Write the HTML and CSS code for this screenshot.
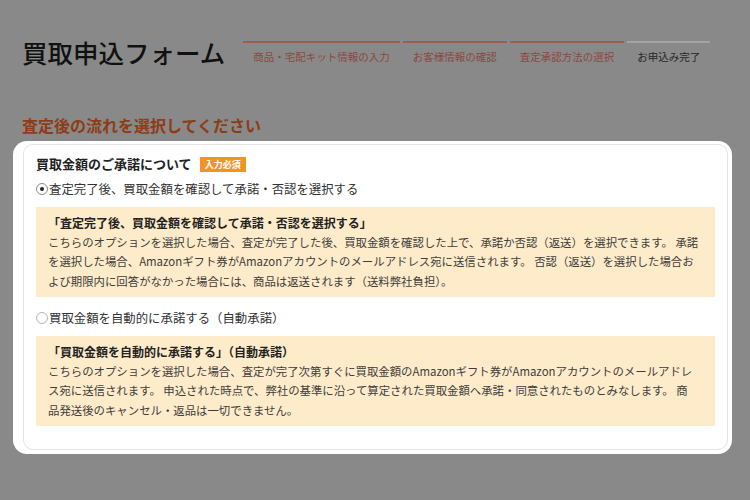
FILE: index.html
```html
<!DOCTYPE html>
<html lang="ja">
<head>
    <meta charset="UTF-8">
    <meta name="viewport" content="width=device-width, initial-scale=1.0">
    <title>買取申込フォーム</title>
    <link rel="stylesheet" href="styles.css">
</head>
<body>
    <div class="pagina">
        <div class="cabecalho">
            <h1 class="titulo">買取申込フォーム</h1>
            <ol class="etapas">
                <li class="etapa feita">商品・宅配キット情報の入力</li>
                <li class="etapa feita">お客様情報の確認</li>
                <li class="etapa feita">査定承認方法の選択</li>
                <li class="etapa">お申込み完了</li>
            </ol>
        </div>

        <h2 class="subtitulo">査定後の流れを選択してください</h2>

        <div class="destaque">
            <div class="caixa">
                <div class="campo-titulo">
                    <span>買取金額のご承諾について</span>
                    <span class="obrigatorio">入力必須</span>
                </div>

                <!-- opção 1 -->
                <label class="opcao">
                    <span class="radio marcado"></span>
                    査定完了後、買取金額を確認して承諾・否認を選択する
                </label>
                <div class="explicacao">
                    <p class="explicacao-titulo">「査定完了後、買取金額を確認して承諾・否認を選択する」</p>
                    <p>こちらのオプションを選択した場合、査定が完了した後、買取金額を確認した上で、承諾か否認（返送）を選択できます。 承諾<br>を選択した場合、Amazonギフト券がAmazonアカウントのメールアドレス宛に送信されます。 否認（返送）を選択した場合お<br>よび期限内に回答がなかった場合には、商品は返送されます（送料弊社負担）。</p>
                </div>

                <!-- opção 2 -->
                <label class="opcao segunda">
                    <span class="radio"></span>
                    買取金額を自動的に承諾する（自動承諾）
                </label>
                <div class="explicacao">
                    <p class="explicacao-titulo">「買取金額を自動的に承諾する」（自動承諾）</p>
                    <p>こちらのオプションを選択した場合、査定が完了次第すぐに買取金額のAmazonギフト券がAmazonアカウントのメールアドレ<br>ス宛に送信されます。 申込された時点で、弊社の基準に沿って算定された買取金額へ承諾・同意されたものとみなします。 商<br>品発送後のキャンセル・返品は一切できません。</p>
                </div>
            </div>
        </div>
    </div>
</body>
</html>
```

FILE: styles.css
```css
body {
    margin: 0;
    background-color: #898989;
    font-family: "Noto Sans CJK JP", sans-serif;
    color: #333;
}
.pagina {
    padding: 37px 18px 0 22px;
}
.cabecalho {
    display: flex;
    align-items: flex-start;
}
.titulo {
    margin: 0;
    font-size: 25.5px;
    line-height: 30px;
    font-weight: 500;
    color: #111;
}
.etapas {
    display: flex;
    gap: 3px;
    list-style: none;
    margin: 4px 0 0 18px;
    padding: 0;
}
.etapa {
    border-top: 2px solid #a3a3a3;
    padding: 7px 10px 0;
    font-size: 10.5px;
    line-height: 14px;
    color: #262626;
}
.etapa.feita {
    border-top-color: #9c5d52;
    color: #8a4a40;
}
.subtitulo {
    margin: 47px 0 0;
    font-size: 16px;
    line-height: 22px;
    font-weight: bold;
    color: #8d3c17;
}
.destaque {
    margin: 5px 0 0 -9px;
    padding: 3px 4px 4px 10px;
    background-color: white;
    border-radius: 14px;
}
.caixa {
    border: 1px solid #e4e4e4;
    border-radius: 10px;
    padding: 8px 12px 23px;
}
.campo-titulo {
    display: flex;
    align-items: center;
    gap: 8px;
    font-size: 13px;
    line-height: 22px;
    font-weight: bold;
    color: #222;
}
.obrigatorio {
    background-color: #f19425;
    color: white;
    font-size: 9px;
    line-height: 15px;
    padding: 0 5px;
}
.opcao {
    display: flex;
    align-items: center;
    gap: 1px;
    margin-top: 4px;
    font-size: 12.4px;
    line-height: 20px;
    color: #333;
}
.opcao.segunda {
    margin-top: 11px;
}
.radio {
    width: 10px;
    height: 10px;
    border: 1px solid #b5b5b5;
    border-radius: 50%;
    display: flex;
    align-items: center;
    justify-content: center;
    background-color: white;
}
.radio.marcado {
    border-color: #8c8c8c;
}
.radio.marcado::after {
    content: "";
    width: 4px;
    height: 4px;
    border-radius: 50%;
    background-color: #222;
}
.explicacao {
    margin-top: 8px;
    background-color: #fdebc9;
    padding: 6px 8px 6px 12px;
    font-size: 11.4px;
    line-height: 19.5px;
    color: #3d3d3d;
}
.explicacao p {
    margin: 0;
}
.explicacao .explicacao-titulo {
    font-size: 12px;
    font-weight: bold;
    color: #222;
}
```
